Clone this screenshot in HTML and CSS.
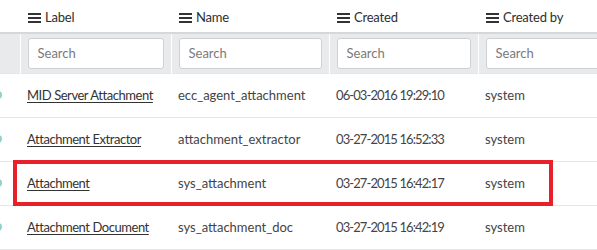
FILE: index.html
```html
<!DOCTYPE html>
<html lang="en">
<head>
  <meta charset="UTF-8">
  <title>Tables</title>
  <link rel="stylesheet" href="styles.css">
</head>
<body>
  <div class="wrap">
    <table class="list">
      <colgroup>
        <col class="c0">
        <col class="c1">
        <col class="c2">
        <col class="c3">
        <col class="c4">
      </colgroup>
      <thead>
        <tr class="head">
          <th></th>
          <th><i class="menu"></i>Label</th>
          <th><i class="menu"></i>Name</th>
          <th><i class="menu"></i>Created</th>
          <th><i class="menu"></i>Created by</th>
        </tr>
        <tr class="filter">
          <td></td>
          <td><input type="text" placeholder="Search"></td>
          <td><input type="text" placeholder="Search"></td>
          <td><input type="text" placeholder="Search"></td>
          <td><input type="text" placeholder="Search"></td>
        </tr>
      </thead>
      <tbody>
        <tr>
          <td><span class="dot"></span></td>
          <td class="label"><a href="#">MID Server Attachment</a></td>
          <td>ecc_agent_attachment</td>
          <td class="date">06-03-2016 19:29:10</td>
          <td>system</td>
        </tr>
        <tr>
          <td><span class="dot"></span></td>
          <td class="label"><a href="#">Attachment Extractor</a></td>
          <td>attachment_extractor</td>
          <td class="date">03-27-2015 16:52:33</td>
          <td>system</td>
        </tr>
        <tr>
          <td><span class="dot"></span></td>
          <td class="label"><a href="#">Attachment</a></td>
          <td>sys_attachment</td>
          <td class="date">03-27-2015 16:42:17</td>
          <td>system</td>
        </tr>
        <tr>
          <td><span class="dot"></span></td>
          <td class="label"><a href="#">Attachment Document</a></td>
          <td>sys_attachment_doc</td>
          <td class="date">03-27-2015 16:42:19</td>
          <td>system</td>
        </tr>
      </tbody>
    </table>
    <!-- highlight box over the third row -->
    <div class="mark"></div>
  </div>
</body>
</html>
```
FILE: styles.css
```css
*{
  margin: 0;
  padding: 0;
  box-sizing: border-box;
}
body{
  width: 597px;
  height: 250px;
  overflow: hidden;
  background: #fff;
  font-family: "Lato", "Open Sans", sans-serif;
  font-size: 13px;
  color: #333;
}
.wrap{
  position: relative;
  width: 597px;
  overflow: hidden;
}
.list{
  width: 640px;
  table-layout: fixed;
  border-collapse: collapse;
}
.c0{ width: 20px; }
.c1{ width: 151px; }
.c2{ width: 158px; }
.c3{ width: 149px; }
.c4{ width: 162px; }
.list th,
.list td{
  padding: 0 7px;
  text-align: left;
  white-space: nowrap;
  vertical-align: middle;
}
.head th{
  height: 33px;
  padding-top: 2px;
  font-weight: normal;
  color: #2e2e2e;
  letter-spacing: -0.2px;
}
.menu{
  display: inline-block;
  vertical-align: -1px;
  width: 13px;
  height: 10px;
  margin: 0 4px 0 1px;
  border-top: 2px solid #333;
  border-bottom: 2px solid #333;
  background: linear-gradient(#333, #333) center / 100% 2px no-repeat;
}
.filter td{
  height: 40px;
  background: #e9eaeb;
  border-top: 2px solid #d6d7d8;
  border-left: 1px solid #fff;
}
.filter td:first-child{
  border-left: none;
}
.filter input{
  display: block;
  width: 100%;
  height: 31px;
  padding: 0 9px;
  border: 1px solid #cfd0d1;
  border-radius: 3px;
  background: #fff;
  font-family: inherit;
  font-size: 13px;
  color: #333;
}
.filter input::placeholder{
  color: #7a7a7a;
}
tbody td{
  height: 44px;
  border-top: 1px solid #e6e6e6;
  color: #444;
}
tbody tr:last-child td{
  border-bottom: 1px solid #e6e6e6;
}
tbody td:first-child{
  padding: 0;
}
tbody .label{
  letter-spacing: -0.45px;
}
tbody .date{
  letter-spacing: -0.9px;
}
tbody a{
  color: #333;
  text-decoration: underline;
  text-underline-offset: 2px;
}
.dot{
  display: block;
  width: 8px;
  height: 8px;
  margin-left: -6px;
  border-radius: 50%;
  background: #8fd0ca;
}
.mark{
  position: absolute;
  left: 13px;
  top: 160px;
  width: 540px;
  height: 46px;
  border: 4px solid #e8202a;
}
```
